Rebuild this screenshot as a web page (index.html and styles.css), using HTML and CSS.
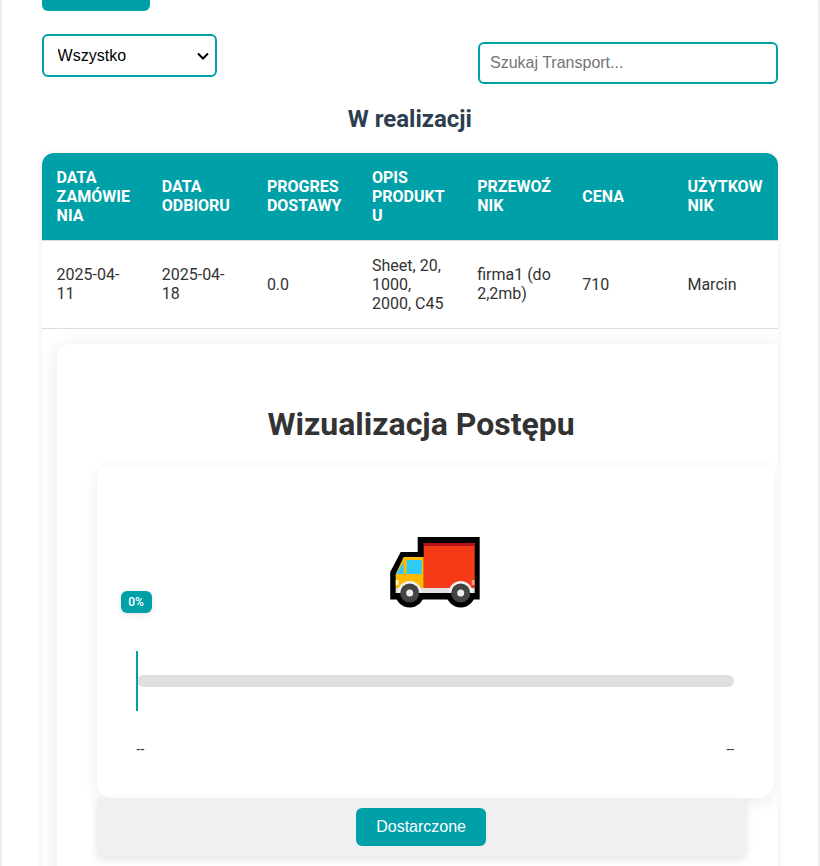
FILE: index.html
```html
<!DOCTYPE html>
<html lang="pl">
<head>
<meta charset="utf-8">
<title>Transport</title>
<link rel="stylesheet" href="styles.css">
</head>
<body>
<main class="page">
  <div class="top-button"></div>
  <div class="controls">
    <select class="filter"><option>Wszystko</option></select>
    <input class="search" type="text" placeholder="Szukaj Transport...">
  </div>
  <h2 class="section-title">W realizacji</h2>
  <div class="table-wrap">
    <table class="orders">
      <thead>
        <tr>
          <th>Data zamówienia</th>
          <th>Data odbioru</th>
          <th>Progres dostawy</th>
          <th>Opis produktu</th>
          <th>Przewoźnik</th>
          <th>Cena</th>
          <th>Użytkownik</th>
        </tr>
      </thead>
      <tbody>
        <tr>
          <td>2025-04-11</td>
          <td>2025-04-18</td>
          <td>0.0</td>
          <td>Sheet, 20, 1000, 2000, C45</td>
          <td>firma1 (do 2,2mb)</td>
          <td>710</td>
          <td>Marcin</td>
        </tr>
        <tr>
          <td class="detail-cell" colspan="7">
            <section class="card">
              <h1 class="card-title">Wizualizacja Postępu</h1>
              <div class="chart">
                <svg class="truck" viewBox="0.300 0 130 100" width="130" height="100" aria-hidden="true">
                  <path d="M48 17H110V79.500H20.500V52L31 32H48Z" fill="#000"/>
                  <circle cx="40" cy="73" r="14.500" fill="#000"/>
                  <circle cx="91" cy="73" r="14.500" fill="#000"/>
                  <rect x="54" y="23" width="51" height="45" fill="#f43a17"/>
                  <rect x="54" y="23" width="51" height="3" fill="#b5121b"/>
                  <path d="M34 37H54V68H26V54Z" fill="#ffb900"/>
                  <path d="M37 40H52V54H37Z" fill="#2ecbfa"/>
                  <path d="M26.500 54H34V42Z" fill="#2ecbfa"/>
                  <rect x="26" y="60" width="3" height="5" fill="#fff3c4"/>
                  <rect x="102" y="60" width="3" height="5" fill="#f59a85"/>
                  <rect x="26" y="68" width="79" height="5" fill="#e2e2e2"/>
                  <path d="M28 73A12 12 0 0 1 52 73Z" fill="#f2f2f2"/>
                  <path d="M79 73A12 12 0 0 1 103 73Z" fill="#f2f2f2"/>
                  <circle cx="40" cy="73" r="9.500" fill="#444"/>
                  <circle cx="91" cy="73" r="9.500" fill="#444"/>
                  <circle cx="40" cy="73" r="3.500" fill="#eee"/>
                  <circle cx="91" cy="73" r="3.500" fill="#eee"/>
                </svg>
                <div class="progress">
                  <span class="badge">0%</span>
                  <span class="marker"></span>
                  <div class="track"></div>
                </div>
                <div class="dates"><span>--</span><span>--</span></div>
              </div>
              <div class="actions">
                <button class="deliver" type="button">Dostarczone</button>
              </div>
            </section>
          </td>
        </tr>
      </tbody>
    </table>
  </div>
</main>
</body>
</html>
```
FILE: styles.css
```css
* { box-sizing: border-box; }

html, body {
  height: 866px;
  margin: 0;
  overflow: hidden;
  background: #f4f4f4;
}

body {
  padding: 0 1px 0 1.600px;
  font-family: Roboto, "Liberation Sans", sans-serif;
  color: #333;
}

.page {
  width: 816.800px;
  min-height: 866px;
  padding: 0 40.400px 0 40px;
  background: #fff;
  box-shadow: 0 0 6px rgba(0, 0, 0, 0.08);
}

.top-button {
  width: 108px;
  height: 11px;
  background: #00a0a8;
  border-radius: 0 0 6px 6px;
}

.controls {
  display: flex;
  justify-content: space-between;
  align-items: flex-start;
  margin-top: 23px;
}

.filter {
  appearance: none;
  width: 175px;
  height: 43px;
  padding: 0 30px 0 14px;
  border: 2px solid #00a0a8;
  border-radius: 6px;
  background: #fff url("data:image/svg+xml,%3Csvg xmlns='http://www.w3.org/2000/svg' width='14' height='10' viewBox='0 0 14 10'%3E%3Cpath d='M2 2.500L7 7.500L12 2.500' fill='none' stroke='%23000' stroke-width='2'/%3E%3C/svg%3E") no-repeat right 5px center;
  color: #000;
  font: 16px "Liberation Sans", Arial, sans-serif;
}

.search {
  width: 300px;
  height: 42px;
  margin-top: 8px;
  padding: 0 10px;
  border: 2px solid #00a0a8;
  border-radius: 6px;
  background: #fff;
  font: 16px "Liberation Sans", Arial, sans-serif;
}

.section-title {
  margin: 20.500px 0 20.200px;
  font-size: 24px;
  font-weight: 700;
  line-height: 28px;
  text-align: center;
  color: #2c3e50;
}

.table-wrap {
  width: 736px;
  height: 760px;
  border-radius: 12px 12px 0 0;
  overflow: hidden;
  background: #fff;
  box-shadow: 0 0 6px rgba(0, 0, 0, 0.08);
}

.orders {
  width: 736px;
  table-layout: fixed;
  border-collapse: collapse;
}

.orders th,
.orders td {
  padding: 15px;
  text-align: left;
  font-size: 16px;
  overflow-wrap: break-word;
  border-bottom: 1px solid #ddd;
}

.orders th {
  background: #00a0a8;
  color: #fff;
  font-weight: 700;
  text-transform: uppercase;
}

.orders td.detail-cell {
  border-bottom: 0;
}

.card {
  width: 729px;
  padding: 40px;
  border-radius: 12px;
  background: #fff;
  box-shadow: 0 4px 20px rgba(0, 0, 0, 0.1);
}

.card-title {
  margin: 21.440px 0;
  font-size: 32px;
  font-weight: 700;
  text-align: center;
  color: #333;
}

.chart {
  width: 677.600px;
  padding: 55px 40px 41px;
  border-radius: 15px;
  background: #fff;
  box-shadow: 0 4px 15px rgba(0, 0, 0, 0.08);
}

.truck {
  display: block;
  margin: 0 auto;
}

.progress {
  position: relative;
  display: flex;
  align-items: center;
  height: 60px;
  margin-top: 31px;
}

.badge {
  position: absolute;
  left: -16px;
  top: -60px;
  width: 31px;
  height: 22px;
  border-radius: 6px;
  background: #00a0a8;
  color: #fff;
  font-size: 12px;
  font-weight: 500;
  line-height: 22px;
  text-align: center;
  box-shadow: 0 2px 6px rgba(0, 0, 0, 0.1);
}

.marker {
  position: absolute;
  left: -1px;
  top: 0;
  width: 2px;
  height: 60px;
  background: #00a0a8;
}

.track {
  width: 100%;
  height: 12px;
  border-radius: 6px;
  background: #e0e0e0;
}

.dates {
  display: flex;
  justify-content: space-between;
  margin-top: 30px;
  font-size: 14px;
}

.actions {
  display: flex;
  justify-content: center;
  padding: 10px;
  border-radius: 0 0 8px 8px;
  background: #f0f0f0;
  box-shadow: 0 4px 8px rgba(0, 0, 0, 0.1);
}

.deliver {
  width: 130px;
  height: 38px;
  padding: 0;
  border: 0;
  border-radius: 6px;
  background: #00a0a8;
  color: #fff;
  font: 16px "Liberation Sans", Arial, sans-serif;
}
```
